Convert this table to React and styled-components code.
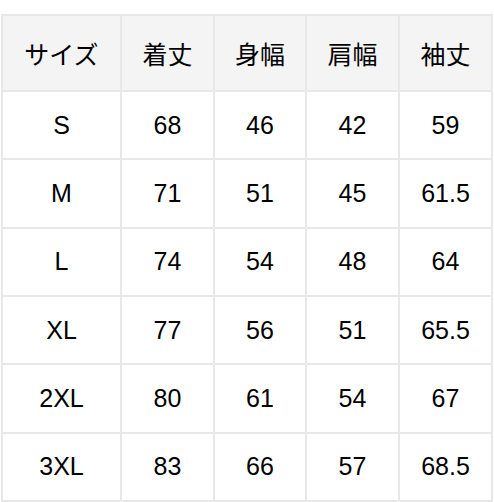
import React from "react";
import styled, { createGlobalStyle } from "styled-components";

const Global = createGlobalStyle`
  html, body { margin: 0; padding: 0; background: #fff; }
  body { font-family: "Liberation Sans", "Noto Sans CJK JP", Arial, sans-serif; }
`;

const Page = styled.div`
  padding: 14px 0 0 1px;
  width: 494px;
  box-sizing: border-box;
`;

const Grid = styled.div`
  display: grid;
  grid-template-columns: 117px 91px 90px 91px 91px;
  grid-template-rows: 74px repeat(6, 1fr);
  gap: 2px;
  padding: 2px;
  width: 492px;
  height: 488px;
  box-sizing: border-box;
  background: #e8e8e8;
`;

const Cell = styled.div`
  display: flex;
  align-items: center;
  justify-content: center;
  background: ${(p) => (p.$head ? "#f4f4f4" : "#ffffff")};
  color: #000;
  font-size: 25px;
  font-family: ${(p) =>
    p.$head
      ? '"Noto Sans CJK JP", "Liberation Sans", sans-serif'
      : '"Liberation Sans", "Noto Sans CJK JP", sans-serif'};
`;

const headers = ["サイズ", "着丈", "身幅", "肩幅", "袖丈"];
const rows = [
  ["S", "68", "46", "42", "59"],
  ["M", "71", "51", "45", "61.5"],
  ["L", "74", "54", "48", "64"],
  ["XL", "77", "56", "51", "65.5"],
  ["2XL", "80", "61", "54", "67"],
  ["3XL", "83", "66", "57", "68.5"],
];

export default function App() {
  return (
    <Page>
      <Global />
      <Grid>
        {headers.map((h) => (
          <Cell key={h} $head>
            {h}
          </Cell>
        ))}
        {rows.map((r) =>
          r.map((v, i) => <Cell key={r[0] + i}>{v}</Cell>)
        )}
      </Grid>
    </Page>
  );
}
